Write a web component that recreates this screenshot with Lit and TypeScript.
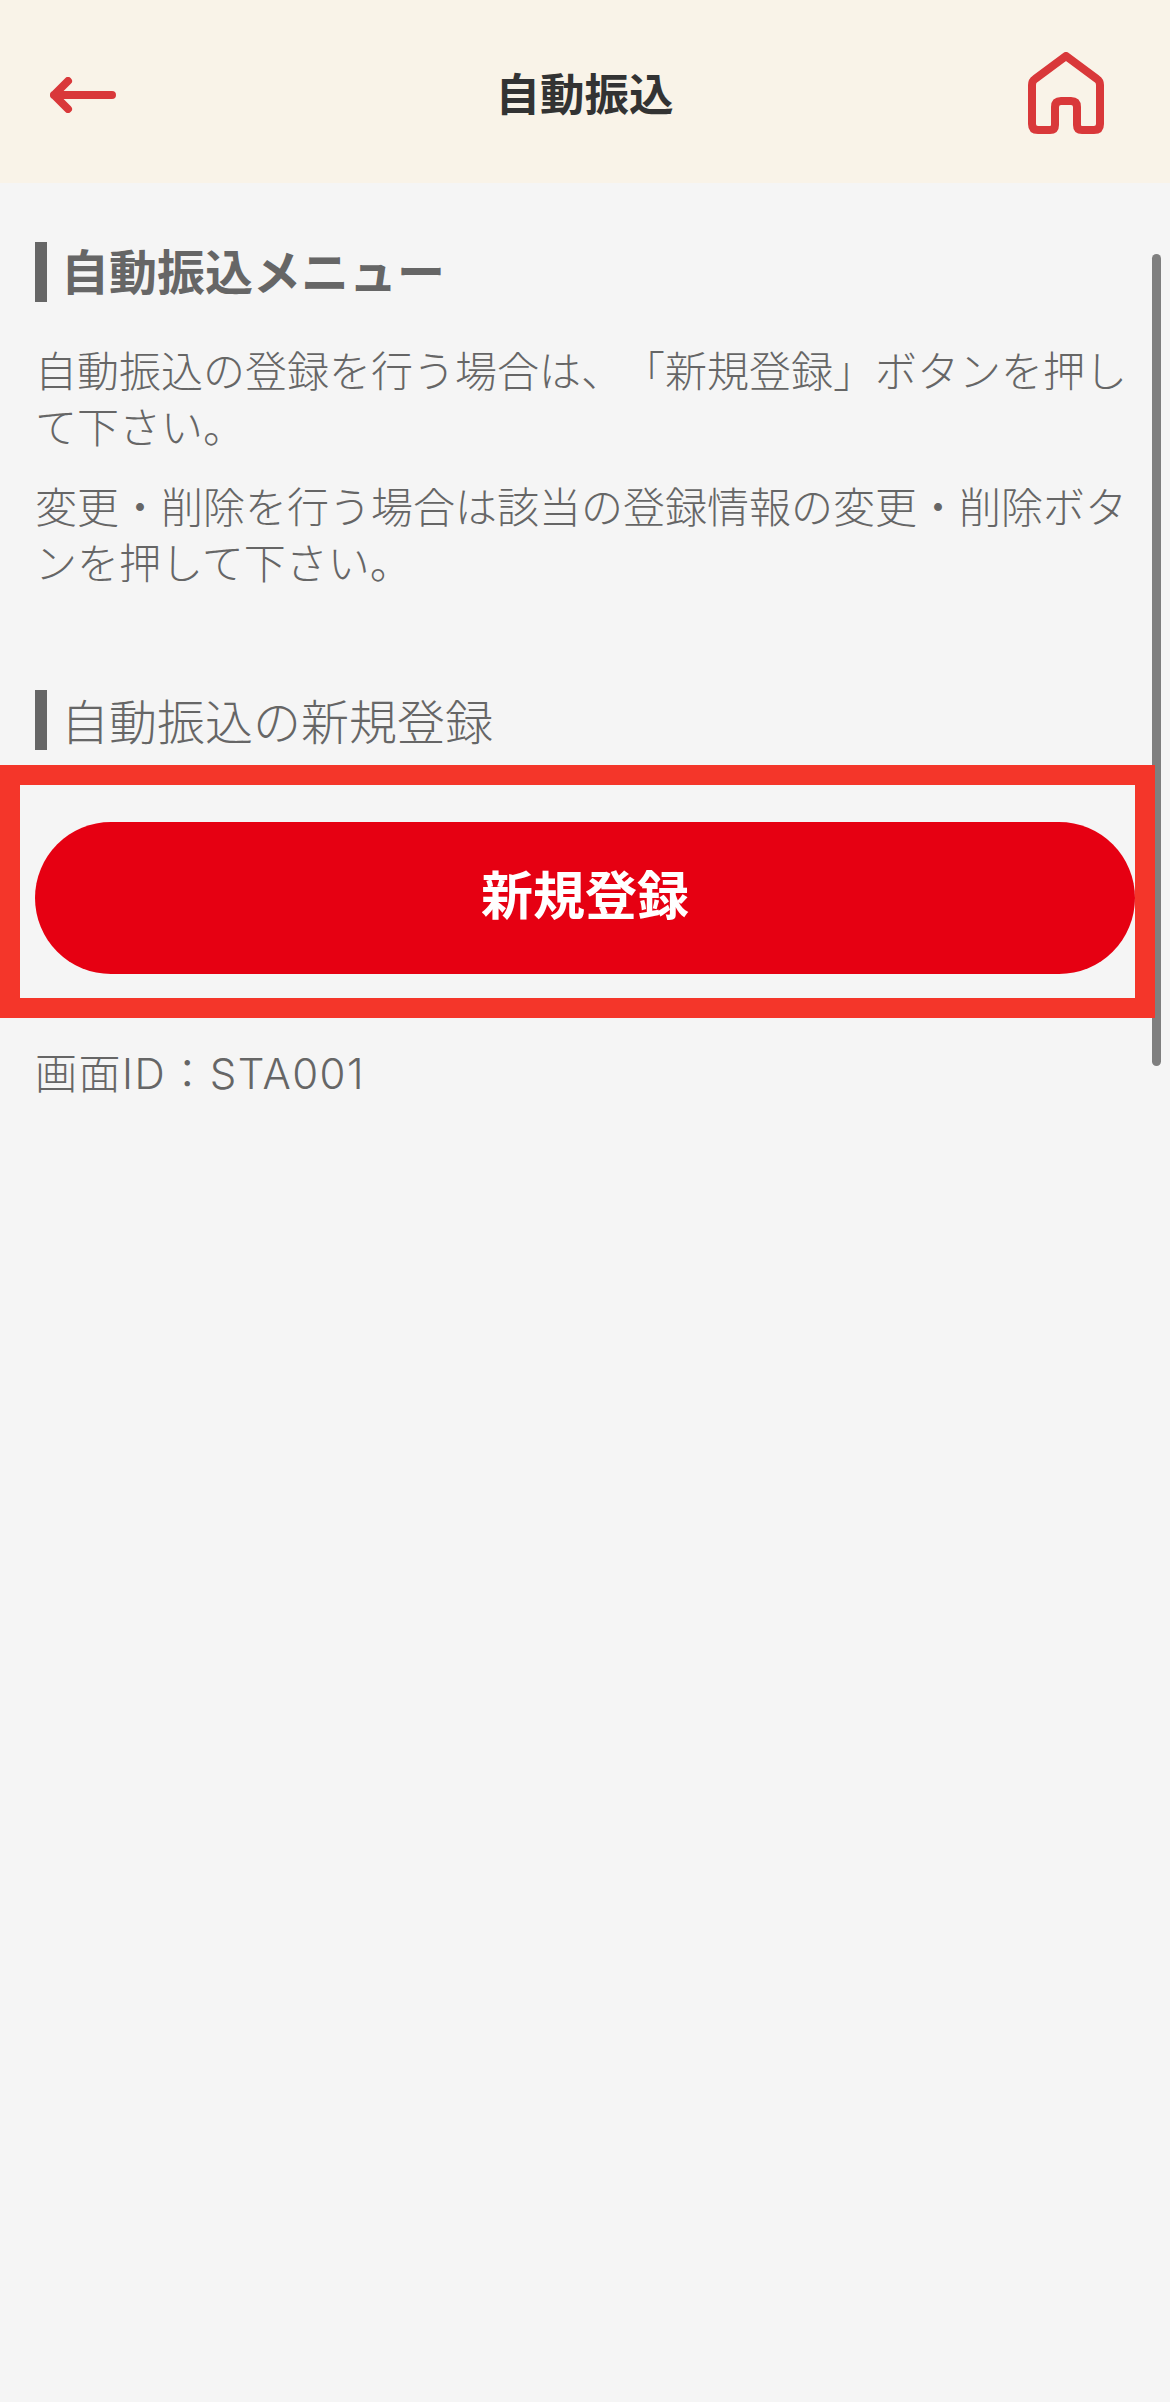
import { LitElement, html, css } from "lit";
import { customElement } from "lit/decorators.js";

@customElement("app-root")
export class AppRoot extends LitElement {
  static styles = css`
    :host {
      display: block;
      position: relative;
      width: 1170px;
      height: 2402px;
      overflow: hidden;
      background: #f5f5f5;
      font-family: "Noto Sans CJK JP", "Noto Sans", sans-serif;
      color: #666;
      text-spacing-trim: space-all;
    }
    .header {
      height: 183px;
      background: #f9f3e8;
      display: flex;
      align-items: center;
      justify-content: space-between;
      padding: 3px 66px 0 50px;
      box-sizing: border-box;
    }
    .header svg { display: block; }
    .back { margin-top: 3px; }
    .title {
      font-size: 44.5px;
      font-weight: 700;
      color: #333;
      line-height: 1;
      margin-left: 25px;
      margin-bottom: 1px;
    }
    .main { padding-top: 59px; }
    .heading {
      margin: 0 0 0 35px;
      padding-left: 14px;
      border-left: 12px solid #666;
      height: 60px;
      line-height: 58px;
      font-size: 48px;
      font-weight: 300;
    }
    .heading.strong {
      font-weight: 700;
      line-height: 54px;
    }
    .heading.second { margin-top: 101px; }
    .copy { margin: 39px 35px 0 35px; }
    .copy p {
      margin: 0 0 24px;
      font-size: 42px;
      line-height: 56px;
      font-weight: 300;
    }
    .frame {
      position: relative;
      z-index: 1;
      margin-top: 15px;
      width: 1155px;
      box-sizing: border-box;
      border: 20px solid #f4362a;
      padding: 37px 0 24px 15px;
    }
    .btn {
      display: flex;
      align-items: center;
      justify-content: center;
      box-sizing: border-box;
      height: 152px;
      padding-bottom: 12px;
      border-radius: 76px;
      background: #e60012;
      color: #fff;
      font-size: 52px;
      font-weight: 700;
    }
    .id {
      margin: 27px 0 0 35px;
      font-family: "Inter", "Noto Sans CJK JP", sans-serif;
      font-size: 42px;
      line-height: 57px;
      font-weight: 300;
      letter-spacing: 1.5px;
    }
    .scrollbar {
      position: absolute;
      left: 1152px;
      top: 254px;
      width: 9px;
      height: 812px;
      border-radius: 4.5px;
      background: #7f7f7f;
    }
  `;

  render() {
    return html`
      <div class="header">
        <svg class="back" width="66" height="36" viewBox="0 0 66 36" fill="none" stroke="#d9383a" stroke-width="8" stroke-linecap="round" stroke-linejoin="round">
          <path d="M4 18H62M18 4L4 18L18 32" />
        </svg>
        <div class="title">自動振込</div>
        <svg width="76" height="82" viewBox="0 0 76 82" fill="none" stroke="#d9383a" stroke-width="8" stroke-linecap="round" stroke-linejoin="round">
          <path d="M38 4L69 27Q72 29 72 33V72Q72 78 66 78H54Q49 78 49 73V55Q49 49 43 49H33Q27 49 27 55V73Q27 78 22 78H10Q4 78 4 72V33Q4 29 7 27Z" />
        </svg>
      </div>
      <div class="main">
        <h2 class="heading strong">自動振込メニュー</h2>
        <div class="copy">
          <p>自動振込の登録を行う場合は、「新規登録」ボタンを押して下さい。</p>
          <p>変更・削除を行う場合は該当の登録情報の変更・削除ボタンを押して下さい。</p>
        </div>
        <h2 class="heading second">自動振込の新規登録</h2>
        <div class="frame"><div class="btn">新規登録</div></div>
        <div class="id">画面ID：STA001</div>
      </div>
      <div class="scrollbar"></div>
    `;
  }
}
